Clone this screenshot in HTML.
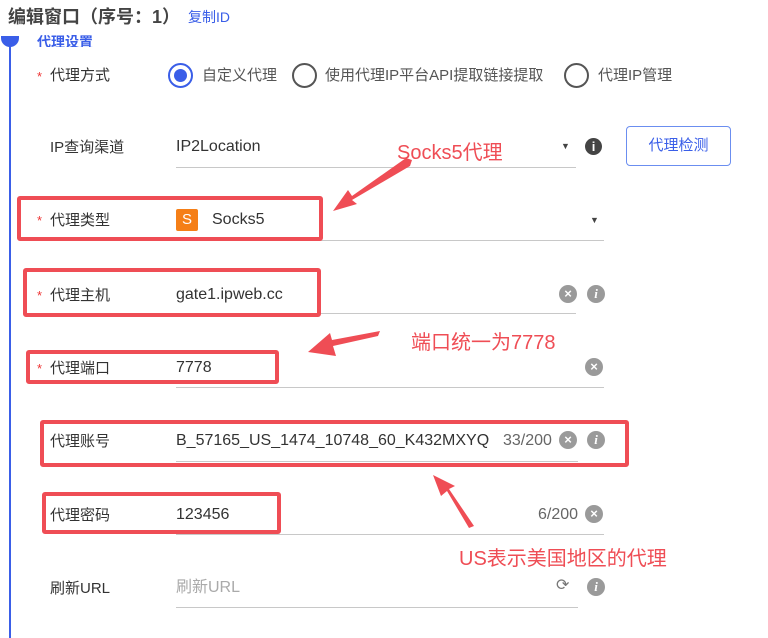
<!DOCTYPE html>
<html><head><meta charset="utf-8"><style>
*{margin:0;padding:0;box-sizing:border-box}
body{width:768px;height:638px;background:#fff;position:relative;overflow:hidden;font-family:"Liberation Sans","Noto Sans CJK SC",sans-serif;color:#333}
.a{position:absolute;white-space:nowrap;line-height:1}
.l{font-size:15px;color:#333;margin-top:1px}
.v{font-size:16px;color:#333;margin-top:0px}
.st{color:#e33;font-size:13px}
.ul{position:absolute;height:1px;background:#c8c8c8}
.rb{position:absolute;border:4px solid #ef4d55;border-radius:3px}
.red{color:#ef4d55;font-size:20px}
.radio{position:absolute;width:25px;height:25px;border:2px solid #555;border-radius:50%}
.ic{position:absolute;width:18px;height:18px;border-radius:50%;background:#9a9a9a;color:#fff;font-size:13px;text-align:center;line-height:18px;font-weight:bold}
</style></head><body>
<div class="a" style="left:8px;top:8px;font-size:18px;font-weight:bold;color:#444">编辑窗口（序号：1）</div>
<div class="a" style="left:188px;top:10px;font-size:14px;color:#3a5ee8">复制ID</div>
<div style="position:absolute;left:9px;top:36px;width:2px;height:602px;background:#3a5ee8"></div>
<div style="position:absolute;left:1px;top:36px;width:18px;height:11px;background:#3a5ee8;border-radius:0 0 9px 9px"></div>
<div class="a" style="left:37px;top:35px;font-size:14px;font-weight:bold;color:#3a5ee8;height:12px;overflow:hidden">代理设置</div>

<div class="a st" style="left:37px;top:70px">*</div><div class="a l" style="left:50px;top:67px">代理方式</div>
<div class="radio" style="left:168px;top:63px;border-color:#3a5ee8"><div style="position:absolute;left:4px;top:4px;width:13px;height:13px;border-radius:50%;background:#3a5ee8"></div></div>
<div class="a l" style="left:202px;top:67px;color:#555">自定义代理</div>
<div class="radio" style="left:292px;top:63px"></div>
<div class="a l" style="left:325px;top:67px;color:#555">使用代理IP平台API提取链接提取</div>
<div class="radio" style="left:564px;top:63px"></div>
<div class="a l" style="left:598px;top:67px;color:#555">代理IP管理</div>

<div class="a l" style="left:50px;top:139px">IP查询渠道</div>
<div class="a v" style="left:176px;top:139px">IP2Location</div>
<div class="ul" style="left:176px;top:167px;width:400px"></div>
<div class="a" style="left:561px;top:142px;font-size:9px;color:#444">▼</div>
<div class="ic" style="left:585px;top:138px;background:#444;width:17px;height:17px;line-height:17px">i</div>
<div style="position:absolute;left:626px;top:126px;width:105px;height:40px;border:1px solid #6b8ef0;border-radius:4px;color:#3a5ee8;font-size:15px;text-align:center;line-height:38px">代理检测</div>
<div class="a red" style="left:397px;top:143px">Socks5代理</div>

<div class="a st" style="left:37px;top:214px">*</div><div class="a l" style="left:50px;top:212px">代理类型</div>
<div style="position:absolute;left:176px;top:209px;width:22px;height:22px;background:#f57f17;border-radius:2px;color:#fff;font-size:15px;text-align:center;line-height:22px">S</div>
<div class="a v" style="left:212px;top:212px">Socks5</div>
<div class="ul" style="left:176px;top:240px;width:428px"></div>
<div class="a" style="left:590px;top:216px;font-size:9px;color:#444">▼</div>
<div class="rb" style="left:17px;top:196px;width:306px;height:45px"></div>

<div class="a st" style="left:37px;top:289px">*</div><div class="a l" style="left:50px;top:287px">代理主机</div>
<div class="a v" style="left:176px;top:287px">gate1.ipweb.cc</div>
<div class="ul" style="left:176px;top:313px;width:400px"></div>
<div class="ic" style="left:559px;top:285px">×</div>
<div class="ic" style="left:587px;top:285px;font-style:italic;font-family:'Liberation Serif',serif">i</div>
<div class="rb" style="left:23px;top:268px;width:298px;height:49px"></div>
<div class="a red" style="left:411px;top:333px">端口统一为7778</div>

<div class="a st" style="left:37px;top:362px">*</div><div class="a l" style="left:50px;top:360px">代理端口</div>
<div class="a v" style="left:176px;top:360px">7778</div>
<div class="ul" style="left:176px;top:387px;width:428px"></div>
<div class="ic" style="left:585px;top:358px">×</div>
<div class="rb" style="left:26px;top:350px;width:253px;height:34px"></div>

<div class="a l" style="left:50px;top:433px">代理账号</div>
<div class="a v" style="left:176px;top:433px">B_57165_US_1474_10748_60_K432MXYQ</div>
<div class="a v" style="left:503px;top:433px;color:#666">33/200</div>
<div class="ul" style="left:176px;top:461px;width:402px"></div>
<div class="ic" style="left:559px;top:431px">×</div>
<div class="ic" style="left:587px;top:431px;font-style:italic;font-family:'Liberation Serif',serif">i</div>
<div class="rb" style="left:40px;top:420px;width:589px;height:47px"></div>

<div class="a l" style="left:50px;top:507px">代理密码</div>
<div class="a v" style="left:176px;top:507px">123456</div>
<div class="a v" style="left:538px;top:507px;color:#666">6/200</div>
<div class="ul" style="left:176px;top:534px;width:428px"></div>
<div class="ic" style="left:585px;top:505px">×</div>
<div class="rb" style="left:42px;top:492px;width:239px;height:42px"></div>
<div class="a red" style="left:459px;top:549px">US表示美国地区的代理</div>

<div class="a l" style="left:50px;top:580px">刷新URL</div>
<div class="a v" style="left:176px;top:580px;color:#aaa">刷新URL</div>
<div class="a" style="left:556px;top:578px;font-size:16px;color:#777">⟳</div>
<div class="ic" style="left:587px;top:578px;font-style:italic;font-family:'Liberation Serif',serif">i</div>
<div class="ul" style="left:176px;top:607px;width:402px"></div>

<svg style="position:absolute;left:0;top:0" width="768" height="638">
<g fill="#ef4d55">
<polygon points="412,160 406,158 352,196 348,190 333,211 357,204 352,200 410,166"/>
<polygon points="380,331 378,336 333,346 336,356 308,352 330,333 332,340"/>
<polygon points="474,526 469,528 447,491 441,496 433,475 455,486 449,489"/>
</g>
</svg>
</body></html>
